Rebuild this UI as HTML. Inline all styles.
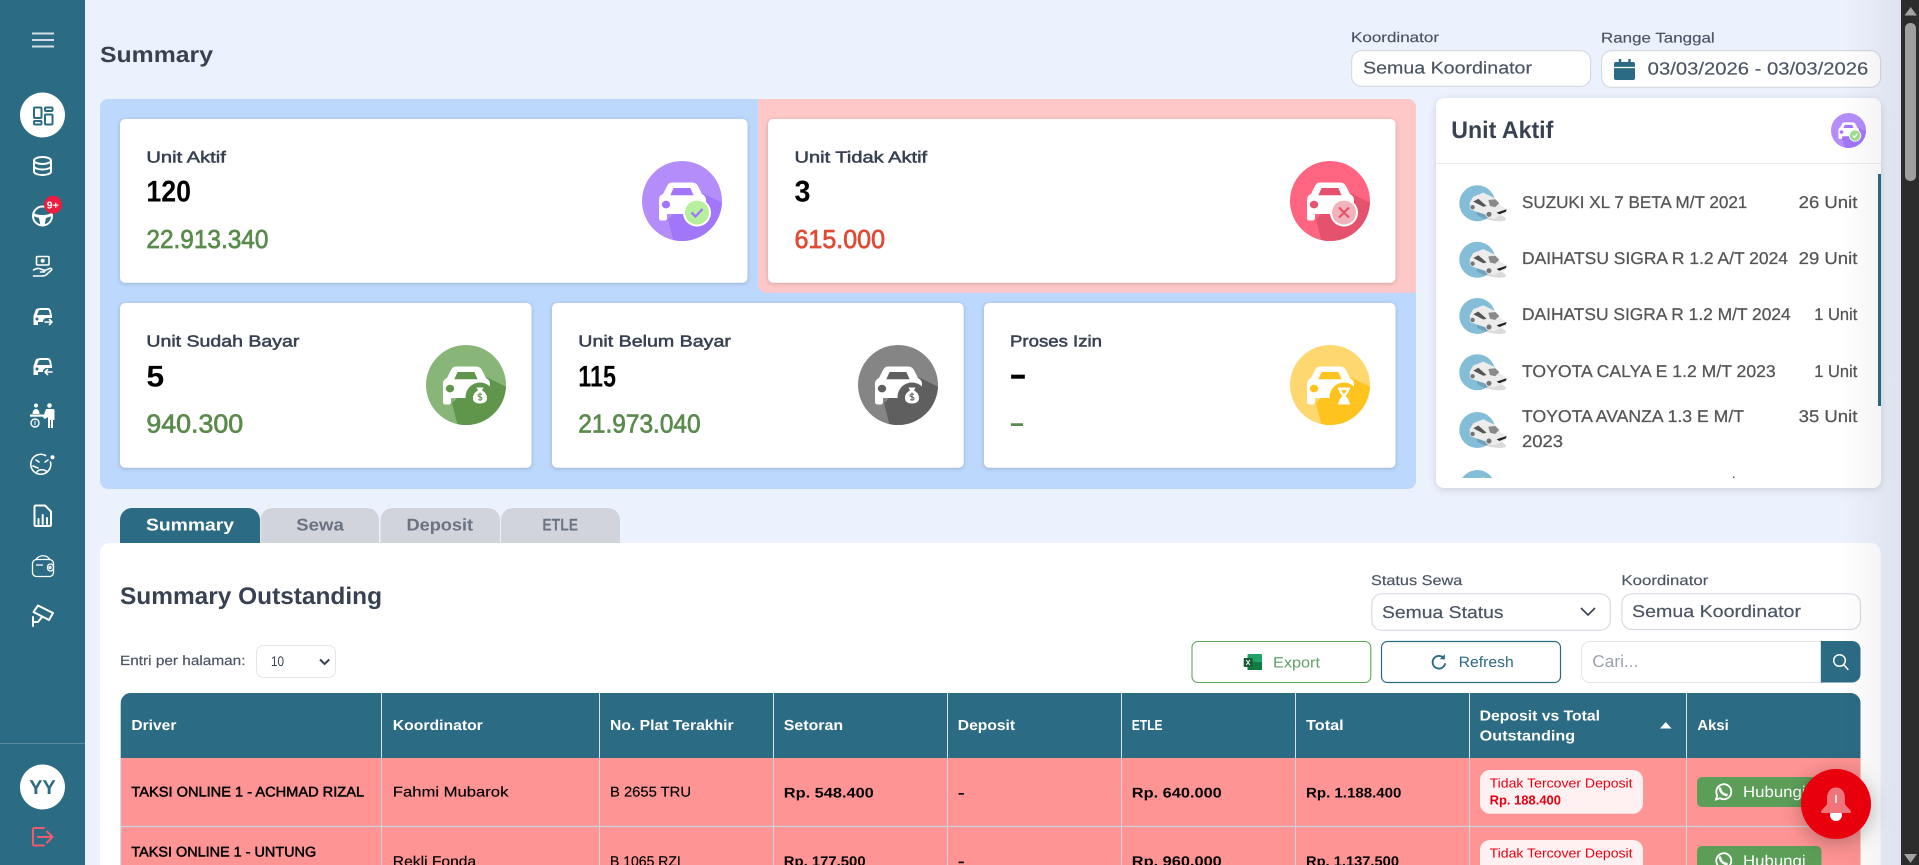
<!DOCTYPE html>
<html lang="id">
<head>
<meta charset="utf-8">
<title>Summary</title>
<style>
html,body{margin:0;padding:0;width:1919px;height:865px;overflow:hidden;background:#ecf1fe}
svg{display:block;position:absolute;left:0;top:0}
text{font-family:"Liberation Sans",sans-serif;text-rendering:geometricPrecision;white-space:pre}
.b{font-weight:700}
.m{stroke-width:.5;paint-order:stroke}
.d{fill:#374151}.dm{fill:#374151;stroke:#374151}
.g{fill:#4b5563;stroke:#4b5563;stroke-width:.18}
.l{fill:#555;stroke:#555;stroke-width:.25}
.k{fill:#000}.km{fill:#000;stroke:#000}
.kr{fill:#000;stroke:#000;stroke-width:.18}
.wh{fill:#fff}
.gr{fill:#5a8a4c;stroke:#5a8a4c}
.tl{fill:#2c6b84}
.sc{filter:drop-shadow(0 1px 2px rgba(0,0,0,.18))}
.sl{filter:drop-shadow(0 2px 4px rgba(0,0,0,.13))}
.in{fill:#fff;stroke:#d6dae3;stroke-width:1.2}
.s2{fill:none;stroke:#fff;stroke-width:2;stroke-linecap:round;stroke-linejoin:round}
.s1{fill:none;stroke:#fff;stroke-width:1.6;stroke-linecap:round;stroke-linejoin:round}
.am{stroke-width:.7;paint-order:stroke}
</style>
</head>
<body>
<svg width="1919" height="865" viewBox="0 0 1919 865" xmlns="http://www.w3.org/2000/svg">
<defs>
  <clipPath id="cc"><circle cx="40" cy="40" r="40"/></clipPath>
  <g id="carb">
    <circle cx="40" cy="40" r="40" style="fill:var(--l)"/>
    <polygon clip-path="url(#cc)" points="26,58 32,82 85,85 85,44 58,31 40,45" style="fill:var(--d)"/>
    <path fill="#fff" d="M30 21.5H50c3 0 5 1.500 6.500 4.500l3.500 7c2.500 1.500 4 3 4 6v14H25v4c0 1.500-1 2.500-2.500 2.500h-3c-1.500 0-2.500-1-2.500-2.500V39c0-3 1.500-5 4-6l3.500-7C26 23 27.500 21.500 30 21.500z"/>
    <path d="M28.300 34.300H51.600L48.300 27H31.600z" style="fill:var(--d)"/>
    <ellipse cx="24" cy="43.600" rx="4.200" ry="3.800" style="fill:var(--d)"/>
  </g>
  <g id="th">
    <circle cx="0" cy="0" r="18" fill="#84bdd8"/>
    <ellipse cx="14" cy="13" rx="15" ry="4" fill="#000" opacity=".14" transform="rotate(12 14 13)"/>
    <path fill="#ececec" d="M-8 0L-4-6.700 6-10.700 17.700-5 22.700 1.700 29.300 6 28.700 10 16 15.500 9.300 11.700-4 7.300z"/>
    <path fill="#555" d="M-4-1.700L1-4.500 9.300 2.700 6 3.500z"/>
    <path fill="#8a8a8a" d="M11-3.300L18-4 22 0 17.700 4 12.700 2.700z"/>
    <path fill="#222" d="M19.300 9.300L29.300 6 28.700 8.300 22 11z"/>
    <circle cx="-4.700" cy="4" r="2.600" fill="#777" stroke="#f2f2f2" stroke-width=".7"/>
    <circle cx="11.700" cy="11" r="3" fill="#777" stroke="#f2f2f2" stroke-width=".8"/>
  </g>
  <g id="carsm">
    <path fill="#fff" d="M36 309L40 308H48Q50 308 51 311L52 316V318H47C44 318 43 320 43 322H38V325H33.500V316Z"/>
    <path fill="#2c6b84" d="M37 315L38.500 311Q39 310 40 310H47.500Q48.700 310 49 311L50 315Z"/>
    <circle cx="37" cy="319" r="1.500" fill="#2c6b84"/>
  </g>
  <clipPath id="lst"><rect x="1436" y="170" width="445" height="308"/></clipPath>
  <linearGradient id="sh" x1="0" x2="1" y1="0" y2="0"><stop offset="0" stop-color="#000" stop-opacity="0"/><stop offset="1" stop-color="#000" stop-opacity=".06"/></linearGradient>
</defs>

<!-- page -->
<rect width="1919" height="865" fill="#ecf1fe"/>

<!-- sidebar -->
<rect width="85" height="865" fill="#2c6b84"/>
<path d="M32 33.500H54M32 40H54M32 46.500H54" stroke="#d5e0e6" stroke-width="2"/>
<circle cx="42.500" cy="115" r="22.500" fill="#fff"/>
<g fill="none" stroke="#2c6b84" stroke-width="2" stroke-linejoin="round">
  <rect x="34" y="107.500" width="7.500" height="10.500" rx="1"/>
  <rect x="34" y="121" width="7.500" height="3.500" rx="1"/>
  <rect x="45" y="107.500" width="7.500" height="3.500" rx="1"/>
  <rect x="45" y="114.500" width="7.500" height="10" rx="1"/>
</g>
<g class="s2">
  <ellipse cx="42.500" cy="160.500" rx="8.500" ry="3.500"/>
  <path d="M34 160.500v11c0 2 3.800 3.500 8.500 3.500s8.500-1.500 8.500-3.500v-11M34 166c0 2 3.800 3.500 8.500 3.500s8.500-1.500 8.500-3.500"/>
  <circle cx="42.500" cy="216" r="9.500"/>
</g>
<path fill="#fff" d="M33.500 213c3 1.500 5.500 2 9 2s6-.5 9-2l.5 3-6 2-1.500 7.500h-4L39 218l-6-2z"/>
<circle cx="53" cy="204.700" r="9" fill="#ee1c3e"/>
<text x="46.800" y="208.300" class="b wh" font-size="10" textLength="12" lengthAdjust="spacingAndGlyphs">9+</text>
<g class="s1">
  <rect x="36.500" y="256.500" width="12.500" height="8.500" rx="1"/>
  <path d="M33.500 270c3-2 5-2 7-1l3 1c1.500.5 1.500 2 0 2h-3M43.500 271l6-2.500c2-.7 3 .8 1.500 2l-5 4.500c-1.500 1-3 1-4.500 1h-8"/>
</g>
<circle cx="42.700" cy="260.700" r="2" fill="#fff"/>
<use href="#carsm"/>
<path class="s1" d="M45 322h7m-2.500-2.500 2.500 2.500-2.500 2.500"/>
<use href="#carsm" transform="translate(0 50)"/>
<path class="s1" d="M52 372h-7m2.500-2.500-2.500 2.500 2.500 2.500"/>
<g fill="#fff">
  <circle cx="36" cy="405.500" r="2"/><circle cx="49.500" cy="405.500" r="2.300"/>
  <path d="M32.500 414c0-3 1.500-5 3.500-5s3.500 2 3.500 5z"/>
  <rect x="30" y="414.500" width="15.500" height="2.200"/>
  <path d="M46 409h7c1 0 1.500.6 1.500 1.500V420h-1.500v8h-2v-8h-1v8h-2v-11l-3 2-2-1.500z"/>
</g>
<circle cx="35" cy="423" r="4" fill="none" stroke="#fff" stroke-width="1.400"/>
<path d="M35 420.700v4.600" stroke="#fff" stroke-width="1"/>
<g class="s1">
  <path d="M50.500 462a10 10 0 1 1-5-6.500"/>
  <path d="M37 472c1.500-3 8-3 10 0M36 460l3 2M48 460l-3 2M33 466l5 2"/>
</g>
<circle cx="52.500" cy="457.300" r="2" fill="#fff"/>
<g class="s2">
  <path d="M36 505.500h9l6 6v13q0 1.500-1.500 1.500H36q-1.500 0-1.500-1.500V507q0-1.500 1.500-1.500z"/>
  <path d="M38.500 519v5M42.700 515v9M47 518v6"/>
</g>
<g fill="none" stroke="#fff" stroke-width="1.300" stroke-linecap="round">
  <rect x="32.500" y="559.500" width="21" height="17" rx="4"/>
  <path d="M36 559.500c3-4.500 10-5.500 14 0M36.500 565h6"/>
  <rect x="47.500" y="564" width="6" height="7" rx="3"/>
  <circle cx="50" cy="567.500" r="1"/>
</g>
<g class="s2">
  <path d="M33.500 612l4.500-6.500 15 7.500-4 7z"/>
  <path d="M33 617v9M33 622h5l4-5"/>
</g>
<line y1="743.500" y2="743.500" x2="85" stroke="#5a8ba0"/>
<circle cx="42.500" cy="787" r="22.500" fill="#fff"/>
<text x="29.300" y="794" class="b tl" font-size="20" textLength="26.500" lengthAdjust="spacingAndGlyphs">YY</text>
<g fill="none" stroke="#ef5b6a" stroke-width="2" stroke-linecap="round" stroke-linejoin="round">
  <path d="M44 828H34.500q-1.500 0-1.500 1.500V844q0 1.500 1.500 1.500H44M38 837h14M47 831.500l5.500 5.500-5.500 5.500"/>
</g>

<!-- top filters -->
<text x="100" y="62" class="b d" font-size="22" textLength="113" lengthAdjust="spacingAndGlyphs">Summary</text>
<text x="1351" y="42" class="g" font-size="14" textLength="88" lengthAdjust="spacingAndGlyphs">Koordinator</text>
<text x="1601" y="42.300" class="g" font-size="14" textLength="113.700" lengthAdjust="spacingAndGlyphs">Range Tanggal</text>
<rect x="1351.600" y="50.600" width="239" height="35.800" rx="10" class="in"/>
<text x="1363" y="73.500" class="g" font-size="17" textLength="169" lengthAdjust="spacingAndGlyphs">Semua Koordinator</text>
<rect x="1601.600" y="50.600" width="279" height="36.800" rx="10" class="in"/>
<rect x="1614" y="62" width="21" height="18" rx="2" fill="#2c6b84"/>
<path d="M1620 59v5M1629.500 59v5" stroke="#2c6b84" stroke-width="2.500"/>
<path d="M1614 67.500h21" stroke="#fff" stroke-width="1.200"/>
<text x="1647.700" y="74.300" class="g" font-size="17.500" textLength="220.600" lengthAdjust="spacingAndGlyphs">03/03/2026 - 03/03/2026</text>

<!-- summary panel -->
<rect x="100" y="99" width="1316" height="390" rx="8" fill="#bdd8fd"/>
<path d="M758 99H1408a8 8 0 0 1 8 8V292.700H766a8 8 0 0 1-8-8z" fill="#fec8c8"/>

<g class="sc" fill="#fff">
  <rect x="120" y="119" width="627.500" height="163.700" rx="5"/>
  <rect x="768" y="119" width="627.500" height="163.700" rx="5"/>
  <rect x="120" y="303" width="411.500" height="164.700" rx="5"/>
  <rect x="552" y="303" width="411.700" height="164.700" rx="5"/>
  <rect x="984" y="303" width="411.500" height="164.700" rx="5"/>
</g>

<text x="146.400" y="162.700" class="m dm" font-size="16" textLength="79.400" lengthAdjust="spacingAndGlyphs">Unit Aktif</text>
<text x="146.400" y="201.700" class="b k" font-size="30" textLength="44.700" lengthAdjust="spacingAndGlyphs">120</text>
<text x="146.400" y="248" class="am gr" font-size="26" textLength="122" lengthAdjust="spacingAndGlyphs">22.913.340</text>

<text x="794.500" y="162.700" class="m dm" font-size="16" textLength="132.600" lengthAdjust="spacingAndGlyphs">Unit Tidak Aktif</text>
<text x="794.500" y="201.700" class="b k" font-size="30" textLength="16" lengthAdjust="spacingAndGlyphs">3</text>
<text x="794.500" y="248" class="am" style="fill:#e04a33;stroke:#e04a33" font-size="26" textLength="90.500" lengthAdjust="spacingAndGlyphs">615.000</text>

<text x="146.400" y="346.700" class="m dm" font-size="16" textLength="153" lengthAdjust="spacingAndGlyphs">Unit Sudah Bayar</text>
<text x="146.400" y="386.700" class="b k" font-size="30" textLength="17.800" lengthAdjust="spacingAndGlyphs">5</text>
<text x="146.400" y="432.500" class="am gr" font-size="26" textLength="96.700" lengthAdjust="spacingAndGlyphs">940.300</text>

<text x="578.300" y="346.700" class="m dm" font-size="16" textLength="152.600" lengthAdjust="spacingAndGlyphs">Unit Belum Bayar</text>
<text x="578.300" y="386.700" class="b k" font-size="30" textLength="37.700" lengthAdjust="spacingAndGlyphs">115</text>
<text x="578.300" y="432.500" class="am gr" font-size="26" textLength="122.300" lengthAdjust="spacingAndGlyphs">21.973.040</text>

<text x="1010" y="346.700" class="m dm" font-size="16" textLength="92" lengthAdjust="spacingAndGlyphs">Proses Izin</text>
<text x="1009" y="385.500" class="b k" font-size="34" textLength="18" lengthAdjust="spacingAndGlyphs">-</text>
<text x="1009.500" y="431.500" class="am gr" font-size="26" textLength="15" lengthAdjust="spacingAndGlyphs">-</text>

<!-- purple -->
<g transform="translate(642 161)" style="--l:#b48dfb;--d:#a176f8">
  <use href="#carb"/>
  <circle cx="55" cy="51.600" r="14" fill="#fff"/>
  <circle cx="55" cy="51.600" r="12" fill="#b7f09c"/>
  <path d="M49.500 51.500l4 4 7-7.500" fill="none" stroke="#a176f8" stroke-width="2.300"/>
</g>
<!-- red -->
<g transform="translate(1290 161)" style="--l:#ff6580;--d:#e5526e">
  <use href="#carb"/>
  <circle cx="54" cy="51.600" r="14" fill="#fff"/>
  <circle cx="54" cy="51.600" r="12" fill="#f3b3bb"/>
  <path d="M49 46.500l10 10M59 46.500l-10 10" stroke="#e5526e" stroke-width="2.200"/>
</g>
<!-- green -->
<g transform="translate(426 345)" style="--l:#87b678;--d:#5f964c">
  <use href="#carb"/>
  <circle cx="54" cy="52" r="14.500" fill="#5f964c"/>
  <path d="M50.500 42.500h7l-1.500 3c3 1.500 5 4 5 7.500 0 3.500-2.500 5.500-7 5.500s-7-2-7-5.500c0-3.500 2-6 5-7.500z" fill="#fff"/>
  <path d="M54 47.500v8M56 49.500c-2-1-4-.5-4 1s4 1 4 3-2.500 2-4 1" fill="none" stroke="#5f964c" stroke-width="1"/>
</g>
<!-- grey -->
<g transform="translate(858 345)" style="--l:#858585;--d:#5f5f5f">
  <use href="#carb"/>
  <circle cx="54" cy="52" r="14.500" fill="#5f5f5f"/>
  <path d="M50.500 42.500h7l-1.500 3c3 1.500 5 4 5 7.500 0 3.500-2.500 5.500-7 5.500s-7-2-7-5.500c0-3.500 2-6 5-7.500z" fill="#fff"/>
  <path d="M54 47.500v8M56 49.500c-2-1-4-.5-4 1s4 1 4 3-2.500 2-4 1" fill="none" stroke="#5f5f5f" stroke-width="1"/>
</g>
<!-- yellow -->
<g transform="translate(1290 345)" style="--l:#ffd76f;--d:#ffc31f">
  <use href="#carb"/>
  <circle cx="54" cy="52" r="14.500" fill="#ffc31f"/>
  <path d="M48 42.500h12v2H59c0 3-2 5-3.500 6.500 1.500 1.500 3.500 3.500 3.500 6.500h1v2H48v-2h1c0-3 2-5 3.500-6.500C51 49.500 49 47.500 49 44.500h-1z" fill="#fff"/>
  <path d="M51.500 45h5c-.3 1.700-1.500 3-2.500 4-1-1-2.200-2.300-2.500-4z" fill="#ffc31f"/>
</g>

<!-- unit aktif list -->
<rect x="1436" y="98" width="445" height="390" rx="8" fill="#fff" class="sl"/>
<text x="1451.300" y="138.200" class="b d" font-size="24" textLength="102" lengthAdjust="spacingAndGlyphs">Unit Aktif</text>
<g transform="translate(1831 113) scale(.4375)" style="--l:#b48dfb;--d:#a176f8">
  <use href="#carb"/>
  <circle cx="55" cy="51.600" r="14" fill="#fff"/>
  <circle cx="55" cy="51.600" r="12" fill="#9ee08c"/>
  <path d="M49.500 51.500l4 4 7-7.500" fill="none" stroke="#fff" stroke-width="3"/>
</g>
<line x1="1436" x2="1881" y1="163.500" y2="163.500" stroke="#e9ebef"/>
<rect x="1878" y="174" width="3" height="232" fill="#2c6b84"/>
<g clip-path="url(#lst)">
  <use href="#th" x="1477.300" y="203.300"/>
  <use href="#th" x="1477.300" y="259.700"/>
  <use href="#th" x="1477.300" y="316"/>
  <use href="#th" x="1477.300" y="372.300"/>
  <use href="#th" x="1477.300" y="430"/>
  <use href="#th" x="1477.300" y="488"/>
  <rect x="1733" y="476.500" width="1.500" height="2" fill="#555"/>
</g>
<g class="l" font-size="17">
  <text x="1522" y="207.800" textLength="225.300" lengthAdjust="spacingAndGlyphs">SUZUKI XL 7 BETA M/T 2021</text>
  <text x="1798.700" y="207.800" textLength="58.700" lengthAdjust="spacingAndGlyphs">26 Unit</text>
  <text x="1522" y="263.800" textLength="266" lengthAdjust="spacingAndGlyphs">DAIHATSU SIGRA R 1.2 A/T 2024</text>
  <text x="1798.700" y="263.800" textLength="58.700" lengthAdjust="spacingAndGlyphs">29 Unit</text>
  <text x="1522" y="320.200" textLength="268.700" lengthAdjust="spacingAndGlyphs">DAIHATSU SIGRA R 1.2 M/T 2024</text>
  <text x="1814.300" y="320.200" textLength="43" lengthAdjust="spacingAndGlyphs">1 Unit</text>
  <text x="1522" y="377.200" textLength="253.700" lengthAdjust="spacingAndGlyphs">TOYOTA CALYA E 1.2 M/T 2023</text>
  <text x="1814.300" y="377.200" textLength="43" lengthAdjust="spacingAndGlyphs">1 Unit</text>
  <text x="1522" y="422.200" textLength="222" lengthAdjust="spacingAndGlyphs">TOYOTA AVANZA 1.3 E M/T</text>
  <text x="1798.700" y="422.200" textLength="58.700" lengthAdjust="spacingAndGlyphs">35 Unit</text>
  <text x="1522" y="446.800" textLength="41" lengthAdjust="spacingAndGlyphs">2023</text>
</g>

<!-- tabs -->
<path d="M260.500 543V520a12 12 0 0 1 12-12H367a12 12 0 0 1 12 12V543z" fill="#d1d5db"/>
<path d="M380.500 543V520a12 12 0 0 1 12-12H488a12 12 0 0 1 12 12V543z" fill="#d1d5db"/>
<path d="M501 543V520a12 12 0 0 1 12-12H608a12 12 0 0 1 12 12V543z" fill="#d1d5db"/>
<path d="M120 543V520a12 12 0 0 1 12-12H248a12 12 0 0 1 12 12V543z" fill="#2c6b84"/>
<text x="146" y="530.700" class="b wh" font-size="17" textLength="88" lengthAdjust="spacingAndGlyphs">Summary</text>
<text x="296.300" y="530.700" class="b" fill="#6b7280" font-size="17" textLength="47.500" lengthAdjust="spacingAndGlyphs">Sewa</text>
<text x="406.500" y="530.700" class="b" fill="#6b7280" font-size="17" textLength="66.600" lengthAdjust="spacingAndGlyphs">Deposit</text>
<text x="542.400" y="530.700" class="b" fill="#6b7280" font-size="17" textLength="35.600" lengthAdjust="spacingAndGlyphs">ETLE</text>

<!-- main card -->
<path d="M110 543H1870.700a10 10 0 0 1 10 10V880H100V553a10 10 0 0 1 10-10z" fill="#fff"/>
<text x="120" y="604" class="b d" font-size="24" textLength="262" lengthAdjust="spacingAndGlyphs">Summary Outstanding</text>
<text x="120" y="665" class="g" font-size="13.500" textLength="125.500" lengthAdjust="spacingAndGlyphs">Entri per halaman:</text>
<rect x="256.500" y="645.500" width="79" height="32" rx="7" fill="#fff" stroke="#e2e5ea"/>
<text x="271" y="666" fill="#374151" font-size="14" textLength="13" lengthAdjust="spacingAndGlyphs">10</text>
<path d="M320 659.500l4.600 4.500 4.600-4.500" fill="none" stroke="#374151" stroke-width="2"/>

<text x="1371" y="585" class="g" font-size="14" textLength="91.300" lengthAdjust="spacingAndGlyphs">Status Sewa</text>
<text x="1621.400" y="585" class="g" font-size="14" textLength="87" lengthAdjust="spacingAndGlyphs">Koordinator</text>
<rect x="1371.800" y="593.800" width="238.500" height="36.500" rx="10" class="in"/>
<text x="1382" y="618" class="g" font-size="17" textLength="121.500" lengthAdjust="spacingAndGlyphs">Semua Status</text>
<path d="M1581 608l7 7 7-7" fill="none" stroke="#374151" stroke-width="1.600"/>
<rect x="1621.900" y="593.800" width="238.600" height="35.700" rx="10" class="in"/>
<text x="1632" y="617" class="g" font-size="17" textLength="169" lengthAdjust="spacingAndGlyphs">Semua Koordinator</text>

<rect x="1192" y="641.500" width="178.800" height="41" rx="6" fill="#fff" stroke="#5fa55a" stroke-width="1.100"/>
<rect x="1247.500" y="654" width="14.500" height="16" rx="1" fill="#21a366"/>
<rect x="1247.500" y="662" width="14.500" height="8" fill="#107c41"/>
<rect x="1243.700" y="658" width="9" height="9" rx="1" fill="#185c37"/>
<path d="M1246.300 660l3.600 5M1249.900 660l-3.600 5" stroke="#fff" stroke-width="1"/>
<text x="1273" y="667.300" fill="#5f9f68" font-size="15" textLength="47" lengthAdjust="spacingAndGlyphs">Export</text>

<rect x="1381.500" y="641.500" width="179" height="41" rx="6" fill="#fff" stroke="#2c6b84" stroke-width="1.200"/>
<path d="M1444 658.500a6.300 6.300 0 1 0 1 5.500" fill="none" stroke="#2c6b84" stroke-width="1.900" stroke-linecap="round"/>
<path d="M1444.800 654.300v5h-5z" fill="#2c6b84"/>
<text x="1458.700" y="667" class="tl" font-size="15" textLength="55" lengthAdjust="spacingAndGlyphs">Refresh</text>

<path d="M1824 641.500H1590a8.500 8.500 0 0 0-8.500 8.500v24a8.500 8.500 0 0 0 8.500 8.500H1824z" fill="#fff" stroke="#e2e5ea"/>
<text x="1592.300" y="667" fill="#9ca3af" font-size="17" textLength="46" lengthAdjust="spacingAndGlyphs">Cari...</text>
<path d="M1820.800 641H1852a8.500 8.500 0 0 1 8.500 8.500V674a8.500 8.500 0 0 1-8.500 8.500H1820.800z" fill="#2c6b84"/>
<circle cx="1839.500" cy="660.500" r="5.800" fill="none" stroke="#fff" stroke-width="1.500"/>
<path d="M1844 665l4 4.500" stroke="#fff" stroke-width="1.500" stroke-linecap="round"/>

<!-- table -->
<rect x="120.700" y="758" width="1739.800" height="120" fill="#ff9494"/>
<path d="M131 693H1850a10 10 0 0 1 10.500 10V758H120.700V703a10 10 0 0 1 10.300-10z" fill="#2c6b84"/>
<g stroke="#dbe4ea" stroke-width="1">
  <path d="M381.500 693V758M599.500 693V758M773.500 693V758M947.500 693V758M1121.500 693V758M1295.500 693V758M1469.500 693V758M1686.500 693V758"/>
</g>
<g stroke="#c9d3e0" stroke-width="1">
  <path d="M381.500 758V865M599.500 758V865M773.500 758V865M947.500 758V865M1121.500 758V865M1295.500 758V865M1469.500 758V865M1686.500 758V865M120.700 758V865"/>
  <path d="M120.700 826.500H1860.500" stroke-width="1.200"/>
</g>
<g class="b wh" font-size="14.500">
  <text x="131.400" y="730" textLength="45" lengthAdjust="spacingAndGlyphs">Driver</text>
  <text x="392.800" y="730" textLength="90" lengthAdjust="spacingAndGlyphs">Koordinator</text>
  <text x="610" y="730" textLength="123.600" lengthAdjust="spacingAndGlyphs">No. Plat Terakhir</text>
  <text x="783.800" y="730" textLength="59.300" lengthAdjust="spacingAndGlyphs">Setoran</text>
  <text x="957.800" y="730" textLength="57.300" lengthAdjust="spacingAndGlyphs">Deposit</text>
  <text x="1131.800" y="730" textLength="30.800" lengthAdjust="spacingAndGlyphs">ETLE</text>
  <text x="1306" y="730" textLength="37.700" lengthAdjust="spacingAndGlyphs">Total</text>
  <text x="1479.700" y="720.700" textLength="120.300" lengthAdjust="spacingAndGlyphs">Deposit vs Total</text>
  <text x="1479.700" y="740.700" textLength="95.500" lengthAdjust="spacingAndGlyphs">Outstanding</text>
  <text x="1697.400" y="730" textLength="31.300" lengthAdjust="spacingAndGlyphs">Aksi</text>
</g>
<path d="M1660 728.500h11.500l-5.750-6.500z" fill="#fff"/>

<g font-size="14">
  <text x="131.400" y="796.700" class="m km" textLength="232.700" lengthAdjust="spacingAndGlyphs">TAKSI ONLINE 1 - ACHMAD RIZAL</text>
  <text x="392.800" y="796.700" class="kr" textLength="115.600" lengthAdjust="spacingAndGlyphs">Fahmi Mubarok</text>
  <text x="610" y="796.700" class="kr" textLength="81" lengthAdjust="spacingAndGlyphs">B 2655 TRU</text>
  <text x="783.800" y="797.300" class="b k" textLength="90" lengthAdjust="spacingAndGlyphs">Rp. 548.400</text>
  <text x="957.800" y="797.300" class="b k" textLength="7" lengthAdjust="spacingAndGlyphs">-</text>
  <text x="1131.800" y="797.300" class="b k" textLength="90" lengthAdjust="spacingAndGlyphs">Rp. 640.000</text>
  <text x="1306" y="797.300" class="b k" textLength="95.400" lengthAdjust="spacingAndGlyphs">Rp. 1.188.400</text>

  <text x="131.400" y="856.700" class="m km" textLength="184.800" lengthAdjust="spacingAndGlyphs">TAKSI ONLINE 1 - UNTUNG</text>
  <text x="392.800" y="866" class="kr" textLength="83.400" lengthAdjust="spacingAndGlyphs">Rekli Fonda</text>
  <text x="610" y="866" class="kr" textLength="70.800" lengthAdjust="spacingAndGlyphs">B 1065 RZI</text>
  <text x="783.800" y="866" class="b k" textLength="81.800" lengthAdjust="spacingAndGlyphs">Rp. 177.500</text>
  <text x="957.800" y="866" class="b k" textLength="7" lengthAdjust="spacingAndGlyphs">-</text>
  <text x="1131.800" y="866" class="b k" textLength="90" lengthAdjust="spacingAndGlyphs">Rp. 960.000</text>
  <text x="1306" y="866" class="b k" textLength="93" lengthAdjust="spacingAndGlyphs">Rp. 1.137.500</text>
</g>

<rect x="1480" y="770" width="163" height="43.700" rx="10" fill="#fff0f1"/>
<text x="1489.600" y="787.300" fill="#e60012" font-size="13" textLength="143" lengthAdjust="spacingAndGlyphs">Tidak Tercover Deposit</text>
<text x="1489.600" y="804.300" class="b" fill="#e60012" font-size="13" textLength="71.400" lengthAdjust="spacingAndGlyphs">Rp. 188.400</text>
<rect x="1480" y="840" width="163" height="43.700" rx="10" fill="#fff0f1"/>
<text x="1489.600" y="857.300" fill="#e60012" font-size="13" textLength="143" lengthAdjust="spacingAndGlyphs">Tidak Tercover Deposit</text>
<text x="1489.600" y="874.300" class="b" fill="#e60012" font-size="13" textLength="71.400" lengthAdjust="spacingAndGlyphs">Rp. 137.500</text>

<rect x="1697" y="777" width="124.500" height="30" rx="5" fill="#5c9e58"/>
<g fill="none" stroke="#fff" stroke-width="1.800">
  <path d="M1716 799.500l1.300-4a7.500 7.500 0 1 1 2.700 2.700z"/>
  <path d="M1720 788.500c.5 3.500 3 6 6.500 6.500" stroke-width="2.600" stroke-linecap="round"/>
</g>
<text x="1743" y="797" class="wh" font-size="15.500" textLength="62.600" lengthAdjust="spacingAndGlyphs">Hubungi</text>

<rect x="1697" y="846" width="124.500" height="30" rx="5" fill="#5c9e58"/>
<g fill="none" stroke="#fff" stroke-width="1.800">
  <path d="M1716 868.500l1.300-4a7.500 7.500 0 1 1 2.700 2.700z"/>
  <path d="M1720 857.500c.5 3.500 3 6 6.500 6.500" stroke-width="2.600" stroke-linecap="round"/>
</g>
<text x="1743" y="866" class="wh" font-size="15.500" textLength="62.600" lengthAdjust="spacingAndGlyphs">Hubungi</text>

<!-- right edge shade -->
<rect x="1840" y="0" width="61" height="865" fill="url(#sh)"/>

<!-- fab -->
<g style="filter:drop-shadow(0 4px 10px rgba(0,0,0,.28))">
  <circle cx="1836" cy="804" r="35" fill="#e8000d"/>
</g>
<circle cx="1836" cy="815" r="6" fill="#fff"/>
<path fill="#f0747b" d="M1836 787.500c-6 0-9 5-9 11v6l-5.500 6c-1 1.200-.3 2.500 1 2.500h27c1.300 0 2-1.300 1-2.500l-5.500-6v-6c0-6-3-11-9-11z"/>
<path d="M1836 795v8" stroke="#fff" stroke-width="1.500"/>

<!-- scrollbar -->
<rect x="1901" y="0" width="18" height="865" fill="#2c2c2c"/>
<rect x="1905" y="23" width="11" height="158" rx="5" fill="#9f9f9f"/>
<path d="M1904.500 15.500h12.500l-6.250-8.500z" fill="#a3a3a3"/>
<path d="M1904 854h13l-6.500 9z" fill="#a3a3a3"/>
</svg>
</body>
</html>
